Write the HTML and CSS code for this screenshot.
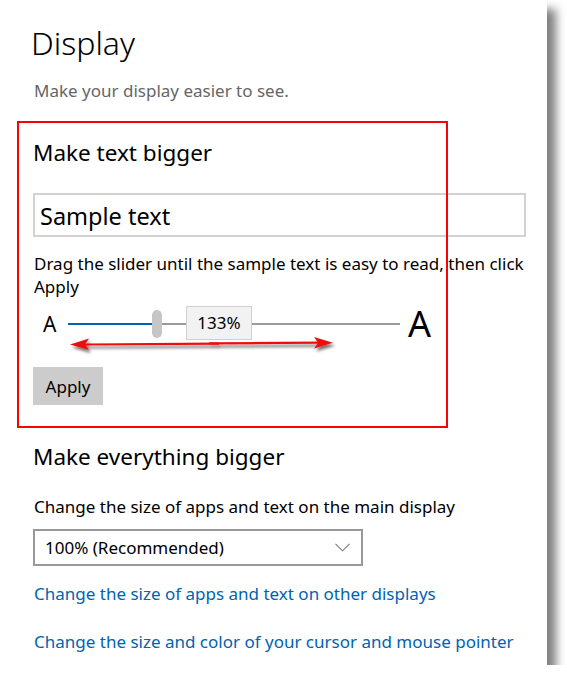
FILE: index.html
```html
<!DOCTYPE html>
<html>
<head>
<meta charset="utf-8">
<link rel="stylesheet" href="styles.css">
</head>
<body>
<div class="window">
  <h1 class="title">Display</h1>
  <p class="subtitle">Make your display easier to see.</p>

  <section class="group group-text">
    <h2 class="heading">Make text bigger</h2>
    <div class="sample">Sample text</div>
    <p class="desc">Drag the slider until the sample text is easy to read, then click Apply</p>
    <div class="slider">
      <span class="a-small">A</span>
      <div class="track">
        <div class="fill"></div>
        <div class="thumb"></div>
        <div class="rest"></div>
        <div class="tip">133%</div>
      </div>
      <span class="a-big">A</span>
      <svg class="arrow" width="280" height="20" viewBox="0 0 280 20">
        <defs>
          <filter id="sh" x="-10%" y="-100%" width="120%" height="300%">
            <feDropShadow dx="2" dy="3" stdDeviation="1.6" flood-color="#000" flood-opacity="0.55"/>
          </filter>
        </defs>
        <g filter="url(#sh)" fill="#ee1111" stroke="none">
          <path d="M16 7.4 L150 6.6 L150 8.8 L16 9.6 Z"/>
          <path d="M140 6.2 L252 5.6 L252 7.8 L140 8.4 Z"/>
          <path d="M1 8.4 L20 2.6 L16 8.4 L20 14 Z"/>
          <path d="M264 6.8 L245 1 L249 6.8 L245 12.4 Z"/>
        </g>
      </svg>
    </div>
    <button class="apply">Apply</button>
    <div class="redbox"></div>
  </section>

  <section class="group group-all">
    <h2 class="heading">Make everything bigger</h2>
    <p class="label">Change the size of apps and text on the main display</p>
    <div class="select">
      <span>100% (Recommended)</span>
      <svg class="chev" width="15" height="9" viewBox="0 0 15 9"><path d="M0.5 0.8 L7.5 7.8 L14.5 0.8" fill="none" stroke="#7a7a7a" stroke-width="1.1"/></svg>
    </div>
    <a class="link link1" href="#">Change the size of apps and text on other displays</a>
    <a class="link link2" href="#">Change the size and color of your cursor and mouse pointer</a>
  </section>
</div>
</body>
</html>
```
FILE: styles.css
```css
html, body {
  margin: 0;
  padding: 0;
  background: #fff;
}
body {
  font-family: "Noto Sans", "Open Sans", sans-serif;
  color: #000;
}
.window {
  position: relative;
  width: 547px;
  height: 665px;
  box-sizing: border-box;
  padding: 23px 0 0 33px;
  background: #fff;
  box-shadow: 9px 9px 9px rgba(0, 0, 0, 0.5);
}
.title {
  margin: 0 0 0 -2px;
  font-size: 32px;
  font-weight: 300;
  line-height: 40px;
}
.subtitle {
  margin: 17px 0 0 1px;
  font-size: 17px;
  line-height: 22px;
  color: #666;
}
.group {
  position: relative;
  display: flex;
  flex-direction: column;
  align-items: flex-start;
}
.group-text {
  margin-top: 37px;
}
.heading {
  margin: 0;
  font-size: 22.5px;
  font-weight: 400;
  line-height: 28px;
}
.sample {
  margin-top: 26px;
  width: 493px;
  height: 44px;
  box-sizing: border-box;
  border: 2px solid #d2d2d2;
  padding: 1px 0 0 5px;
  font-size: 23.5px;
  line-height: 40px;
}
.desc {
  margin: 15px 0 0 1px;
  width: 495px;
  font-size: 17px;
  line-height: 23px;
}
.slider {
  position: relative;
  margin-top: 8px;
  display: flex;
  align-items: center;
  height: 36px;
}
.a-small {
  width: 35px;
  padding-left: 10px;
  box-sizing: border-box;
  font-size: 21px;
  line-height: 36px;
}
.track {
  position: relative;
  width: 332px;
  height: 28px;
  display: flex;
  align-items: center;
}
.fill {
  width: 84px;
  height: 2px;
  background: #0063b1;
}
.thumb {
  width: 10px;
  height: 28px;
  border-radius: 5px;
  background: #c6c6c6;
}
.rest {
  flex: 1;
  height: 2px;
  background: #9a9a9a;
}
.tip {
  position: absolute;
  left: 118px;
  top: -4px;
  width: 66px;
  height: 34px;
  box-sizing: border-box;
  border: 1px solid #cfcfcf;
  background: #f2f2f2;
  font-size: 17px;
  line-height: 32px;
  text-align: center;
}
.a-big {
  margin-left: 8px;
  font-size: 36px;
  line-height: 36px;
}
.arrow {
  position: absolute;
  left: 36px;
  top: 30px;
}
.apply {
  margin-top: 25px;
  width: 70px;
  height: 38px;
  border: none;
  background: #cccccc;
  font-family: inherit;
  font-size: 17px;
  color: #000;
  padding: 0;
}
.redbox {
  position: absolute;
  left: -16px;
  top: -18px;
  width: 431px;
  height: 307px;
  box-sizing: border-box;
  border: 2px solid #ff0000;
  pointer-events: none;
}
.group-all {
  margin-top: 38px;
}
.label {
  margin: 25px 0 0 1px;
  font-size: 17px;
  line-height: 22px;
}
.select {
  margin-top: 11px;
  width: 330px;
  height: 37px;
  box-sizing: border-box;
  border: 2px solid #999;
  display: flex;
  align-items: center;
  justify-content: space-between;
  padding: 0 11px 0 10px;
  font-size: 17px;
}
.link {
  margin-left: 1px;
  color: #0063b1;
  text-decoration: none;
  font-size: 17px;
  line-height: 22px;
}
.link1 {
  margin-top: 17px;
}
.link2 {
  margin-top: 26px;
}
```
